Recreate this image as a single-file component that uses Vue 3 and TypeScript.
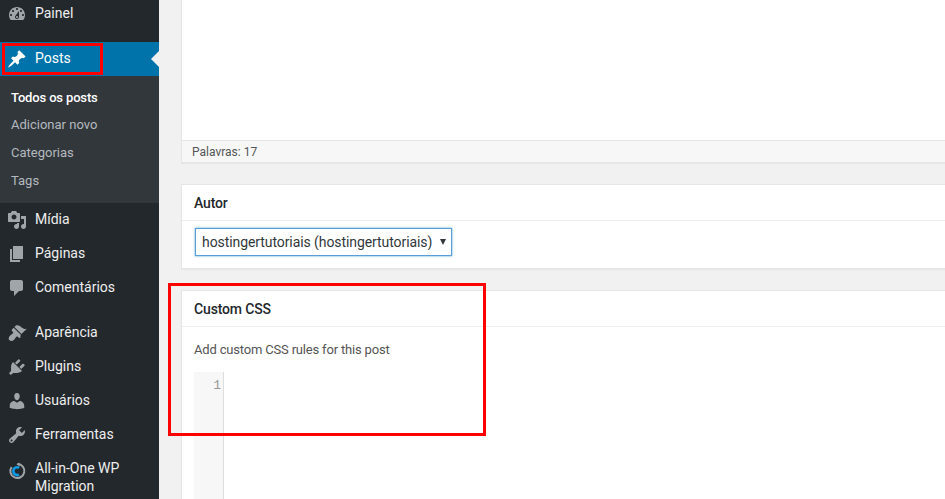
<script setup lang="ts">
interface Item { label: string; path: string; cls?: string }
const top: Item[] = [
  { label: 'Mídia', path: 'M13 11V4c0-.55-.45-1-1-1h-1.67L9 1H5L3.67 3H2c-.55 0-1 .45-1 1v7c0 .55.45 1 1 1h10c.55 0 1-.45 1-1zM7 4.5c1.38 0 2.5 1.12 2.5 2.5S8.38 9.5 7 9.5 4.5 8.38 4.5 7 5.62 4.5 7 4.5zM14 6h5v10.5c0 1.38-1.12 2.5-2.5 2.5S14 17.88 14 16.5s1.12-2.5 2.5-2.5c.17 0 .34.02.5.05V9h-3V6zm-4 8.05V13h2v3.5c0 1.38-1.12 2.5-2.5 2.5S7 17.88 7 16.5 8.12 14 9.5 14c.17 0 .34.02.5.05z' },
  { label: 'Páginas', path: 'M6 15V2h10v13H6zm-1 1h8v2H3V5h2v11z' },
  { label: 'Comentários', path: 'M5 2h9c1.1 0 2 .9 2 2v7c0 1.1-.9 2-2 2h-2l-5 5v-5H5c-1.1 0-2-.9-2-2V4c0-1.1.9-2 2-2z' },
]
const bottom: Item[] = [
  { label: 'Aparência', path: 'M14.48 11.06L7.41 3.99l1.5-1.5c.5-.56 2.3-.47 3.51.32 1.21.8 1.43 1.28 2.91 2.1 1.18.64 2.45 1.26 4.45.85zM13.77 11.77L6.7 4.7 4.93 6.47c-.39.39-.39 1.02 0 1.41l1.06 1.06c.39.39.39 1.03 0 1.42-.6.6-1.43 1.11-2.21 1.69-.35.26-.7.53-1.01.84-1.43 1.43-1.4 3.29-.3 4.4s2.97 1.13 4.4-.3c.31-.31.58-.66.84-1.01.58-.78 1.09-1.61 1.69-2.21.39-.39 1.03-.39 1.42 0l1.06 1.06c.39.39 1.02.39 1.41 0z' },
  { label: 'Plugins', path: 'M13.11 4.36L9.87 7.6 8 5.73l3.24-3.24c.35-.34 1.05-.2 1.56.32.52.51.66 1.21.31 1.55zm-8 1.77l.91-1.12 9.01 9.01-1.19.84c-.71.71-2.63 1.16-3.82 1.16H6.14L4.9 17.26c-.59.59-1.54.59-2.12 0-.59-.58-.59-1.53 0-2.12l1.24-1.24v-3.88c0-1.13.4-3.19 1.09-3.89zm7.26 3.97l3.24-3.24c.34-.35 1.04-.21 1.55.31.52.51.66 1.21.31 1.55l-3.24 3.25z' },
  { label: 'Usuários', path: 'M10 9.25c-2.27 0-2.73-3.44-2.73-3.44C7 4.02 7.82 2 9.97 2c2.16 0 2.98 2.02 2.71 3.81 0 0-.41 3.44-2.68 3.44zm0 2.57L12.72 10c2.39 0 4.52 2.33 4.52 4.53v2.49s-3.65 1.13-7.24 1.13c-3.65 0-7.24-1.13-7.24-1.13v-2.49c0-2.25 1.94-4.48 4.47-4.48z' },
  { label: 'Ferramentas', path: 'M16.68 9.77c-1.34 1.34-3.3 1.67-4.95.99l-5.41 6.52c-.99.99-2.59.99-3.58 0s-.99-2.59 0-3.57l6.52-5.42c-.68-1.65-.35-3.61.99-4.95 1.28-1.28 3.12-1.62 4.72-1.06l-2.89 2.89 2.82 2.82 2.86-2.87c.53 1.58.18 3.39-1.08 4.65zM3.81 16.21c.4.39 1.04.39 1.43 0 .4-.4.4-1.04 0-1.43-.39-.4-1.03-.4-1.43 0-.39.39-.39 1.03 0 1.43z' },
]
const sub = ['Adicionar novo', 'Categorias', 'Tags']
const dash = 'M3.76 16h12.48c1.1-1.37 1.76-3.11 1.76-5 0-4.42-3.58-8-8-8s-8 3.58-8 8c0 1.89.66 3.63 1.76 5zM10 4c.55 0 1 .45 1 1s-.45 1-1 1-1-.45-1-1 .45-1 1-1zM6 6c.55 0 1 .45 1 1s-.45 1-1 1-1-.45-1-1 .45-1 1-1zm8 0c.55 0 1 .45 1 1s-.45 1-1 1-1-.45-1-1 .45-1 1-1zm-5.37 5.55L12 7v6c0 1.1-.9 2-2 2s-2-.9-2-2c0-.57.24-1.08.63-1.45zM4 10c.55 0 1 .45 1 1s-.45 1-1 1-1-.45-1-1 .45-1 1-1zm12 0c.55 0 1 .45 1 1s-.45 1-1 1-1-.45-1-1 .45-1 1-1zm-5 3c0-.55-.45-1-1-1s-1 .45-1 1 .45 1 1 1 1-.45 1-1z'
const pin = 'M10.44 3.02l1.82-1.82 6.36 6.35-1.83 1.82c-1.05-.68-2.48-.57-3.41.36l-.75.75c-.92.93-1.04 2.35-.35 3.41l-1.83 1.82-2.41-2.41-2.8 2.79c-.42.42-3.38 2.71-3.8 2.29s1.86-3.39 2.28-3.81l2.79-2.79L4.1 9.36l1.83-1.82c1.05.69 2.48.57 3.4-.36l.75-.75c.93-.92 1.05-2.35.36-3.41z'
</script>

<template>
  <div class="page">
    <aside class="side">
      <div class="row first">
        <svg class="ico" viewBox="0 0 20 20"><path :d="dash" fill-rule="evenodd" /></svg>
        <span>Painel</span>
      </div>
      <div class="row current">
        <svg class="ico" viewBox="0 0 20 20"><path :d="pin" /></svg>
        <span>Posts</span>
      </div>
      <div class="sub">
        <div class="sub-item strong">Todos os posts</div>
        <div v-for="s in sub" :key="s" class="sub-item">{{ s }}</div>
      </div>
      <div class="group after-sub">
        <div v-for="i in top" :key="i.label" class="row">
          <svg class="ico" viewBox="0 0 20 20"><path :d="i.path" /></svg>
          <span>{{ i.label }}</span>
        </div>
      </div>
      <div class="group after-sep">
        <div v-for="i in bottom" :key="i.label" class="row">
          <svg class="ico" viewBox="0 0 20 20"><path :d="i.path" /></svg>
          <span>{{ i.label }}</span>
        </div>
        <div class="row tall">
          <svg class="ico" viewBox="0 0 20 20">
            <path d="M10.5 3A7 7 0 1 1 4.6 6" fill="none" stroke="#a0a5aa" stroke-width="2" />
            <path d="M12.6 1.6 9.4 3.2 12.6 5.2z" fill="#a0a5aa" />
            <path d="M12.2 6.8A3.9 3.9 0 1 0 12 13.6" fill="none" stroke="#0d9be8" stroke-width="2.6" />
          </svg>
          <span>All-in-One WP Migration</span>
        </div>
      </div>
    </aside>

    <main class="main">
      <section class="box editor">
        <div class="editor-blank"></div>
        <div class="status">Palavras: 17</div>
      </section>

      <section class="box">
        <h2 class="head">Autor</h2>
        <div class="body author">
          <div class="sel-wrap">
            <select class="sel">
              <option>hostingertutoriais (hostingertutoriais)</option>
            </select>
          </div>
        </div>
      </section>

      <section class="box css">
        <h2 class="head">Custom CSS</h2>
        <div class="body css-body">
          <p class="hint">Add custom CSS rules for this post</p>
          <div class="code">
            <div class="gutter">1</div>
          </div>
        </div>
      </section>
    </main>

    <div class="mark mark-posts"></div>
    <div class="mark mark-css"></div>
  </div>
</template>

<style>
html, body { margin: 0; background: #f1f1f1; overflow: hidden; }
</style>

<style scoped>
.page {
  position: relative;
  display: flex;
  width: 945px;
  height: 499px;
  overflow: hidden;
  font-family: Roboto, "Noto Sans", sans-serif;
  background: #f1f1f1;
}
.side {
  flex: 0 0 159px;
  height: 499px;
  overflow: hidden;
  background: #23282d;
  color: #eee;
  font-size: 14px;
}
.row {
  position: relative;
  display: flex;
  align-items: center;
  height: 34px;
  padding-left: 35px;
  line-height: 18px;
}
.ico {
  position: absolute;
  left: 7px;
  top: 8px;
  width: 20px;
  height: 20px;
  fill: #a0a5aa;
}
.first { margin-top: -4px; margin-bottom: 12px; }
.current { background: #0073aa; color: #fff; box-sizing: border-box; padding-bottom: 2px; }
.current .ico { fill: #fff; top: 7px; }
.current::after {
  content: "";
  position: absolute;
  right: 0;
  top: 9px;
  border: 8px solid transparent;
  border-left-width: 0;
  border-right-color: #f1f1f1;
}
.sub {
  height: 127px;
  padding-top: 8px;
  box-sizing: border-box;
  background: #32373c;
  font-size: 13px;
  color: #b4b9be;
}
.sub-item { height: 28px; line-height: 28px; padding-left: 11px; }
.strong { height: 27px; color: #fff; font-weight: 500; letter-spacing: -.15px; }
.after-sub { margin-top: -1px; }
.after-sep { margin-top: 11px; }
.tall { height: auto; padding: 8px 8px 0 35px; }
.tall .ico { top: 10px; }
.main {
  flex: 1;
  min-width: 0;
  padding: 0 0 0 22px;
  color: #444;
}
.box {
  margin: 0 -10px 21px 0;
  background: #fff;
  border: 1px solid #e5e5e5;
  box-shadow: 0 1px 1px rgba(0, 0, 0, .04);
}
.editor { margin-top: -1px; }
.editor-blank { height: 140px; }
.status {
  height: 22px;
  box-sizing: border-box;
  border-top: 1px solid #e5e5e5;
  background: #f7f7f7;
  padding-left: 10px;
  font-size: 12px;
  line-height: 23px;
  color: #555;
}
.head {
  margin: 0;
  height: 36px;
  box-sizing: border-box;
  padding: 0 12px;
  border-bottom: 1px solid #eee;
  font-size: 14px;
  font-weight: 500;
  line-height: 37px;
  letter-spacing: -.15px;
  color: #23282d;
}
.author { padding: 7px 12px 12px; }
.sel-wrap { position: relative; width: 257px; margin-left: 1px; }
.sel-wrap::after {
  content: "";
  position: absolute;
  right: 6px;
  top: 11px;
  border: 3.5px solid transparent;
  border-top: 6px solid #32373c;
  border-bottom-width: 0;
}
.sel {
  display: block;
  width: 100%;
  height: 28px;
  padding: 0 6px;
  border: 1px solid #5b9dd9;
  border-radius: 0;
  box-shadow: 0 0 2px rgba(30, 140, 190, .8);
  background: #fff;
  color: #32373c;
  font: 14px Roboto, sans-serif;
  letter-spacing: -.08px;
  outline: none;
  appearance: none;
}
.css-body { padding: 12px 12px 0; }
.hint { margin: 0 0 11px; font-size: 13px; line-height: 22px; letter-spacing: -.18px; color: #555; }
.code { height: 200px; }
.gutter {
  width: 27px;
  height: 100%;
  padding-right: 2px;
  background: #f7f7f7;
  border-right: 1px solid #ddd;
  text-align: right;
  font: 13px/27px "Liberation Mono", monospace;
  color: #999;
}
.mark { position: absolute; box-sizing: border-box; border: 3px solid #f00; pointer-events: none; }
.mark-posts { left: 2px; top: 43px; width: 101px; height: 32px; }
.mark-css { left: 168px; top: 283px; width: 318px; height: 153px; }
</style>
